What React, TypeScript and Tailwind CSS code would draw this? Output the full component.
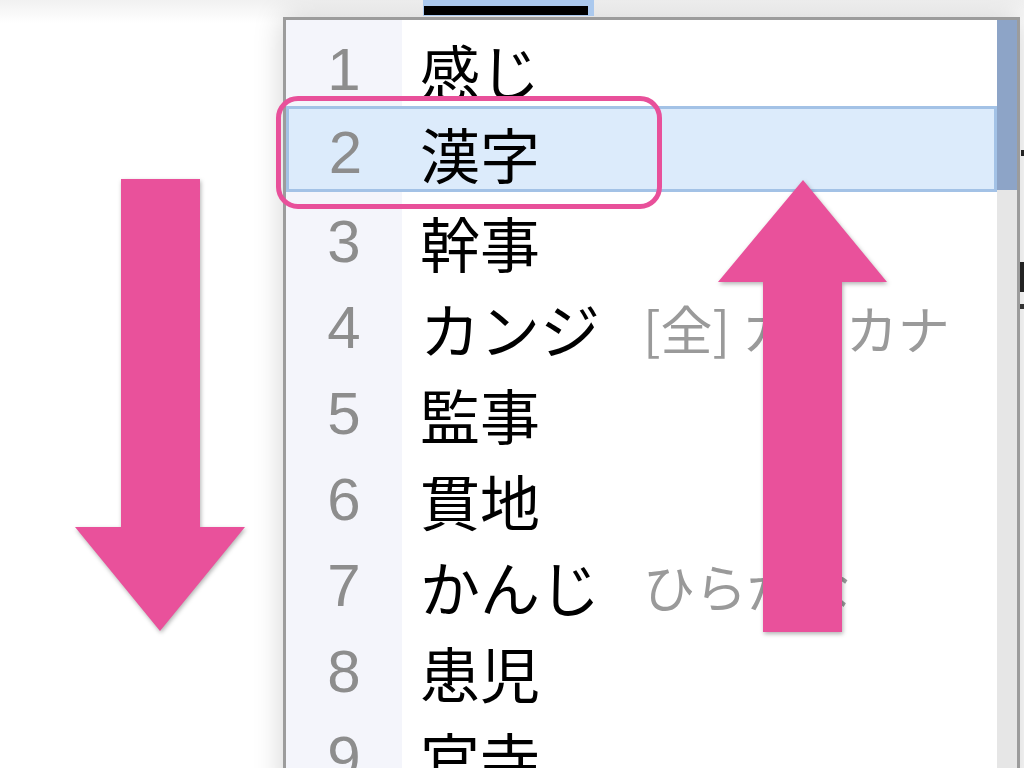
import React from "react"

type Row = { n: number; word: string; note?: string }

const rows: Row[] = [
  { n: 1, word: "感じ" },
  { n: 2, word: "漢字" },
  { n: 3, word: "幹事" },
  { n: 4, word: "カンジ", note: "[全] カタカナ" },
  { n: 5, word: "監事" },
  { n: 6, word: "貫地" },
  { n: 7, word: "かんじ", note: "ひらがな" },
  { n: 8, word: "患児" },
  { n: 9, word: "官寺" },
]

const SELECTED = 2

function CandidateRow({ row }: { row: Row }) {
  const active = row.n === SELECTED
  return (
    <div
      className={
        active
          ? "flex h-[86px] border-[3px] border-[#a3c2e6] bg-[#dcebfb]"
          : "flex h-[86px]"
      }
    >
      <div
        className={
          active
            ? "flex w-[113px] items-center justify-center pt-[8px] text-[60px] leading-none text-[#8d8d8d] font-['Liberation_Sans',Arial,sans-serif]"
            : "flex w-[116px] items-center justify-center bg-[#f4f5fb] pt-[14px] text-[60px] leading-none text-[#8d8d8d] font-['Liberation_Sans',Arial,sans-serif]"
        }
      >
        {row.n}
      </div>
      <div className={active ? "flex items-center pl-[18px] pt-[8px]" : "flex items-center pl-[18px] pt-[14px]"}>
        <span className="w-[223px] whitespace-nowrap text-[60px] leading-none text-black">{row.word}</span>
        {row.note && (
          <span className="whitespace-nowrap text-[52px] leading-none text-[#9a9a9a]">{row.note}</span>
        )}
      </div>
    </div>
  )
}

export default function App() {
  return (
    <div className="relative h-[768px] w-[1024px] overflow-hidden bg-gradient-to-b from-[#f1f1f1] to-white to-[3%] font-['Noto_Sans_CJK_JP','Noto_Sans',sans-serif]">
      {/* composing text at top */}
      <div className="flex h-[17px]">
        <div className="ml-[423px] h-[16px] w-[171px] bg-[#abc9ee] pt-[6px] pl-[1px]">
          <div className="h-[9px] w-[164px] bg-black" />
        </div>
      </div>

      <div className="ml-[283px] flex w-[737px] border-[3px] border-[#9c9c9c] bg-white shadow-[0_0_28px_rgba(0,0,0,0.18)]">
        <div className="flex-1">
          {rows.map((r) => (
            <CandidateRow key={r.n} row={r} />
          ))}
        </div>
        <div className="w-[20px] bg-[#e6e6e6]">
          <div className="h-[170px] bg-[#8da4c7]" />
        </div>
      </div>

      {/* right edge fragments of the app behind */}
      <div className="absolute left-[1021px] top-[150px] h-[6px] w-[3px] bg-[#222]" />
      <div className="absolute left-[1020px] top-[262px] h-[30px] w-[4px] bg-[#222]" />
      <div className="absolute left-[1020px] top-[304px] h-[5px] w-[4px] bg-[#333]" />

      {/* pink annotations */}
      <div className="absolute left-[276px] top-[96px] h-[113px] w-[386px] rounded-[22px] border-[5px] border-[#e8509a]" />

      <svg className="absolute left-0 top-0 drop-shadow-[1px_2px_2px_rgba(0,0,0,0.3)]" width="1024" height="768">
        <polygon fill="#e9519b" points="121,179 200,179 200,527 245,527 160,631 75,527 121,527" />
        <polygon fill="#e9519b" points="803,180 887,282 842,282 842,632 763,632 763,282 718,282" />
      </svg>
    </div>
  )
}
